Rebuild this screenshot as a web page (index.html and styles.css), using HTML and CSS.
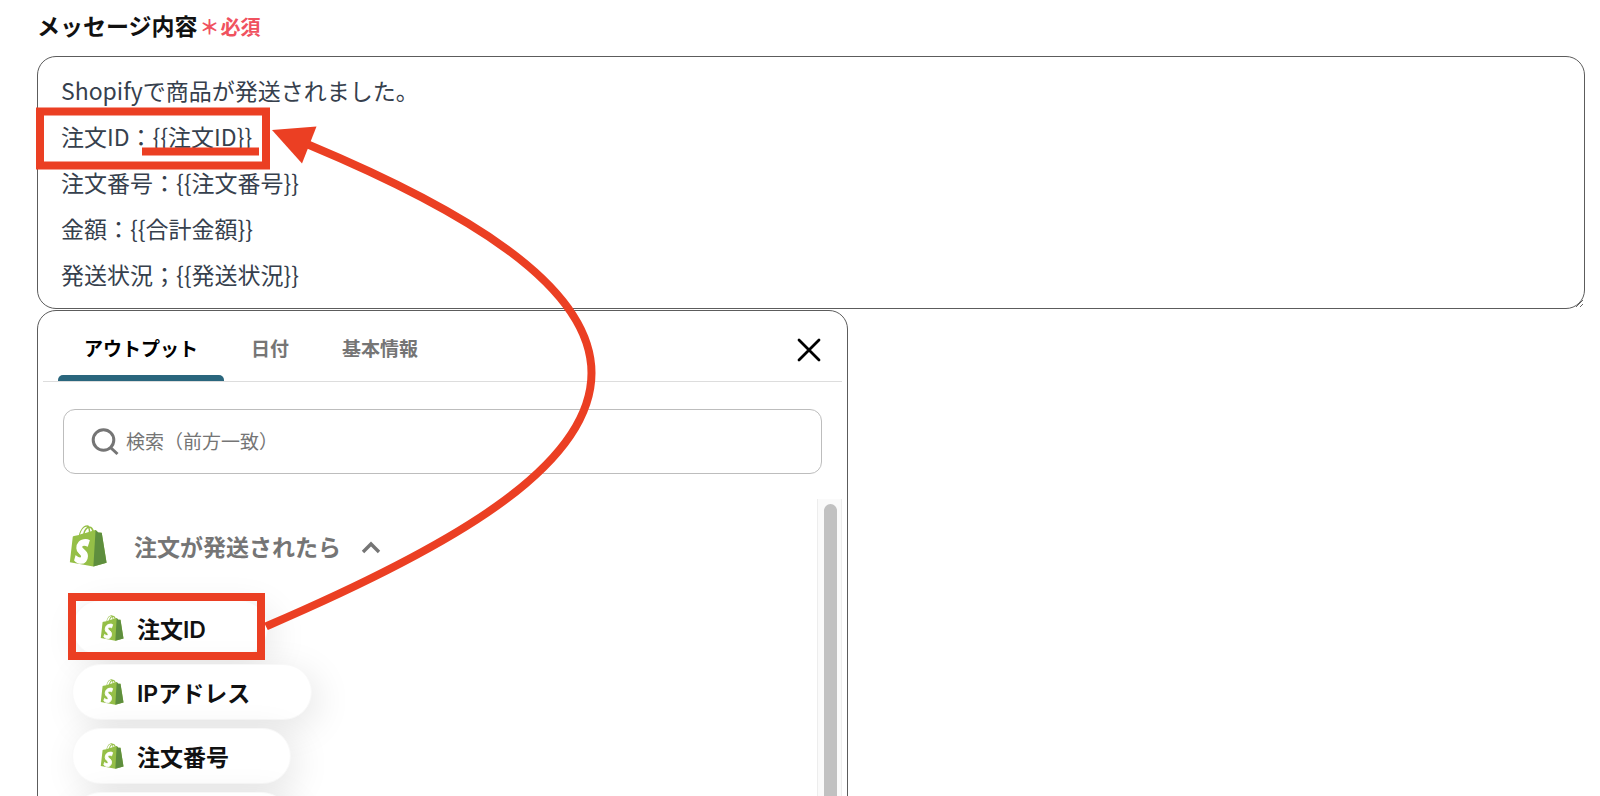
FILE: index.html
```html
<!DOCTYPE html>
<html lang="ja">
<head>
<meta charset="utf-8">
<title>メッセージ内容</title>
<link rel="stylesheet" href="styles.css">
</head>
<body>
<svg class="defs" aria-hidden="true">
  <symbol id="bag" viewBox="0 0 110 125">
    <path fill="#95bf47" d="M96 24c0-.6-.6-1-1-1l-9.500-.7-7-7c-.7-.7-2-.5-2.500-.3l-3.600 1.100C70.200 10 66.500 4.200 59.900 4.200h-.6C57.400 1.700 55.100.7 53.100.7 37.700.7 30.400 19.900 28.100 29.600l-14.800 3.300c-3.300 1-3.400 1.100-3.900 4.300L1 110.600 71 123.500l39.300-11L96 24zM67.200 17.500l-5.800 1.800v-1.300c0-3.800-.5-6.900-1.400-9.300 3.500.4 5.800 4.300 7.200 8.800zM55.700 9.400c1 2.400 1.600 5.900 1.600 10.600v.7l-12 3.700c2.300-8.900 6.700-13.200 10.400-15zM51.100 5c.7 0 1.400.2 2 .7-4.900 2.300-10.200 8.200-12.400 19.900l-9.500 3C33.900 19.600 40.100 5 51.100 5z"/>
    <path fill="#5e8e3e" d="M95 23l-9.500-.7-7-7c-.3-.3-.6-.4-1-.4L71 123.500l39.300-11L96 24c0-.6-.6-1-1-1z"/>
    <path fill="#fff" stroke="#fff" stroke-width="4" transform="translate(-5 -3) scale(1.05 1.130)" d="M60 43.500l-4.600 13.700s-4-2.200-9-2.200c-7.300 0-7.700 4.600-7.700 5.700 0 6.300 16.300 8.700 16.300 23.300 0 11.500-7.300 19-17.200 19-11.800 0-17.900-7.400-17.900-7.400l3.200-10.500s6.200 5.300 11.500 5.300c3.400 0 4.800-2.700 4.800-4.700 0-8.200-13.400-8.600-13.400-22 0-11.300 8.100-22.300 24.500-22.300 6.400 0 9.500 2.100 9.500 2.100z"/>
  </symbol>
</svg>

<main class="page">
  <label class="label" for="message">メッセージ内容<span class="required"><span class="star">＊</span>必須</span></label>
  <textarea class="message" id="message" rows="5">Shopifyで商品が発送されました。
注文ID：{{注文ID}}
注文番号：{{注文番号}}
金額：{{合計金額}}
発送状況；{{発送状況}}</textarea>

  <section class="panel">
    <header class="panel-head">
      <div class="tabs" role="tablist">
        <button class="tab active" type="button" role="tab" aria-selected="true">アウトプット</button>
        <button class="tab" type="button" role="tab" aria-selected="false">日付</button>
        <button class="tab" type="button" role="tab" aria-selected="false">基本情報</button>
      </div>
      <button class="close" type="button" aria-label="閉じる">
        <svg width="24" height="24" viewBox="0 0 24 24" fill="none" stroke="#000" stroke-width="2.800" stroke-linecap="round"><path d="M2 2L22 22M22 2L2 22"/></svg>
      </button>
    </header>

    <div class="search">
      <svg width="28" height="28" viewBox="0 0 28 28" fill="none" stroke="#757575" stroke-width="3"><circle cx="12.500" cy="12" r="10.300"/><path d="M19.500 19.500L26.500 26"/></svg>
      <input class="search-input" type="text" aria-label="検索" placeholder="検索（前方一致）">
    </div>

    <div class="results">
      <div class="list">
        <button class="group" type="button">
          <svg class="bag-large"><use href="#bag"/></svg>
          <span class="group-name">注文が発送されたら</span>
          <svg width="20" height="16" viewBox="0 0 20 16" fill="none" stroke="#757575" stroke-width="3.400"><path d="M2 14L10 6L18 14"/></svg>
        </button>
        <div class="chips">
          <button class="chip" type="button"><svg class="bag-small"><use href="#bag"/></svg>注文ID</button>
          <button class="chip" type="button"><svg class="bag-small"><use href="#bag"/></svg>IPアドレス</button>
          <button class="chip" type="button"><svg class="bag-small"><use href="#bag"/></svg>注文番号</button>
          <button class="chip chip-next" type="button" aria-label="合計金額"></button>
        </div>
      </div>
      <div class="track"><div class="thumb"></div></div>
    </div>
  </section>

  <svg class="marks" aria-hidden="true" width="600" height="670" viewBox="0 0 600 670" fill="none" stroke="#eb3f23" stroke-width="8">
    <rect x="40" y="111.500" width="226" height="54"/>
    <path d="M142 151.500H259"/>
    <rect x="72" y="597" width="189" height="59"/>
    <path d="M266 626.500L267 626C447 548.600 591.500 468 591.500 373C591.500 284 460 208 308 144.500"/>
    <path d="M272 130L316.500 126.500L302 163.500Z" fill="#eb3f23" stroke="none"/>
  </svg>
</main>
</body>
</html>
```
FILE: styles.css
```css
* {
  box-sizing: border-box;
}

body {
  margin: 0;
  background: #fff;
  color: #111;
  font-family: Inter, "Noto Sans CJK JP", sans-serif;
}

button {
  margin: 0;
  padding: 0;
  border: 0;
  background: none;
  color: inherit;
  font: inherit;
  cursor: pointer;
}

.defs {
  position: absolute;
  width: 0;
  height: 0;
}

.page {
  position: relative;
  display: flex;
  flex-direction: column;
  gap: 1px;
  height: 100vh;
  padding: 0 15px 0 37px;
  overflow: hidden;
}

.label {
  flex: none;
  height: 55px;
  font-size: 23px;
  font-weight: 700;
  line-height: 54px;
}

.required {
  margin-left: 2px;
  color: #f0525f;
  font-size: 20px;
}

.star {
  margin-right: 1px;
}

.message {
  display: block;
  flex: none;
  width: 100%;
  margin: 0;
  padding: 10px 23px 11px;
  border: 1px solid #5c5c5c;
  border-radius: 19px;
  outline: 0;
  background: #fff;
  color: #36404d;
  font-family: "Noto Sans CJK JP", sans-serif;
  font-size: 23px;
  line-height: 46px;
  overflow: hidden;
  resize: vertical;
}

.panel {
  display: flex;
  flex: none;
  flex-direction: column;
  width: 100%;
  max-width: 811px;
  border: 1px solid #5c5c5c;
  border-radius: 19px;
}

.panel-head {
  display: flex;
  align-items: stretch;
  justify-content: space-between;
  height: 71px;
  margin: 0 5px;
  padding: 0 21px 0 15px;
  border-bottom: 1px solid #ddd;
}

.tabs {
  display: flex;
  gap: 1px;
}

.tab {
  padding: 8px 26px 0;
  border-bottom: 6px solid transparent;
  color: #757575;
  font-size: 19px;
  font-weight: 700;
}

.tab.active {
  position: relative;
  color: #000;
}

.tab.active::after {
  content: "";
  position: absolute;
  right: 0;
  bottom: -6px;
  left: 0;
  height: 6px;
  border-radius: 5px 5px 0 0;
  background: #2a667d;
}

.close {
  padding-top: 8px;
  line-height: 0;
}

.search {
  display: flex;
  align-items: center;
  gap: 7px;
  height: 65px;
  margin: 27px 25px 25px;
  padding: 0 27px;
  border: 1px solid #bdbdbd;
  border-radius: 12px;
}

.search-input {
  flex: 1;
  min-width: 0;
  padding: 2px 0 0;
  border: 0;
  outline: 0;
  background: none;
  font: inherit;
  font-size: 19px;
}

.search-input::placeholder {
  color: #757575;
  opacity: 1;
}

.results {
  display: flex;
  margin-right: 5px;
}

.list {
  flex: 1;
  padding: 23px 0 24px 30px;
}

.group {
  display: flex;
  align-items: center;
  height: 48px;
  color: #757575;
  font-size: 23px;
  font-weight: 700;
}

.group-name {
  margin: 0 20px 0 26px;
}

.bag-large {
  width: 40px;
  height: 42px;
}

.chips {
  display: flex;
  flex-direction: column;
  align-items: flex-start;
  gap: 8px;
  margin-top: 30px;
  padding-left: 4px;
}

.chip {
  display: flex;
  align-items: center;
  gap: 12px;
  height: 56px;
  padding: 0 61px 0 26px;
  border: 1px solid #f8f8f8;
  border-radius: 28px;
  background: #fff;
  box-shadow: 6px 8px 36px rgba(0, 0, 0, 0.1);
  font-size: 23px;
  font-weight: 600;
}

.chip-next {
  width: 218px;
}

.bag-small {
  width: 26px;
  height: 26px;
}

.track {
  width: 25px;
  padding: 5px 4px 5px 6px;
  border: solid #ededed;
  border-width: 0 1px;
  background: #fafafa;
}

.thumb {
  width: 13px;
  height: 100%;
  border-radius: 7px;
  background: #c1c1c1;
}

.marks {
  position: absolute;
  top: 0;
  left: 0;
  pointer-events: none;
}
```
